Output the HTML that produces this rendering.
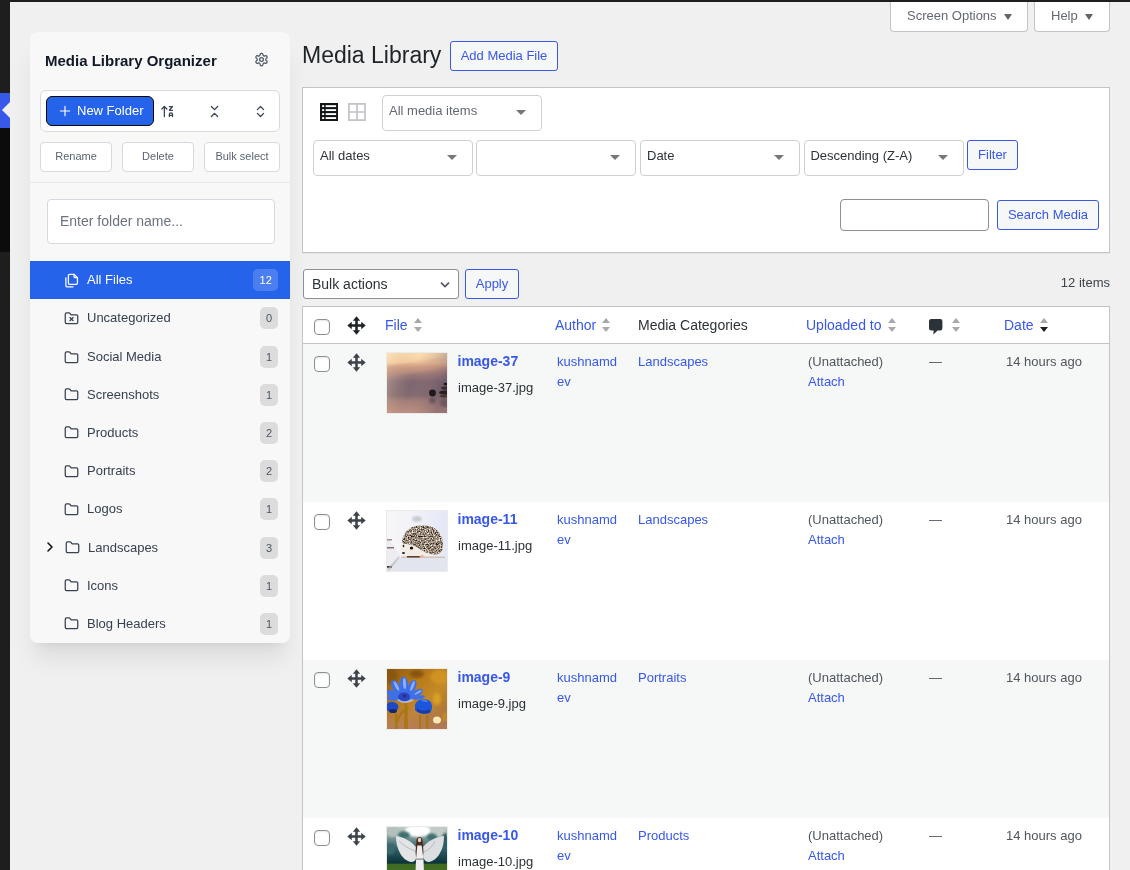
<!DOCTYPE html>
<html lang="en">
<head>
<meta charset="utf-8">
<title>Media Library</title>
<style>
*{box-sizing:border-box}
html,body{margin:0;padding:0}
body{width:1130px;height:870px;overflow:hidden;background:#f0f0f1;font-family:"Liberation Sans",Arial,sans-serif;font-size:13px;line-height:1.4;color:#3c434a;position:relative;will-change:transform}
a{color:#3858e9;text-decoration:none}
.abs{position:absolute}
/* left dark strip */
#strip{left:0;top:0;width:10px;height:870px;background:#1e1e1e}
#strip .cur{left:0;top:93px;width:10px;height:35px;background:#3858e9}
#strip .cur:after{content:"";position:absolute;right:0;top:9px;border:8px solid transparent;border-right-color:#f0f0f1;border-left-width:0}
#strip .sub{left:0;top:128px;width:10px;height:124px;background:#0c0c0c}
#topbar{left:0;top:0;width:1130px;height:2px;background:#1e1e1e;z-index:5}
/* screen meta */
.smeta{top:0;height:32px;background:#fff;border:1px solid #c3c4c7;border-top:none;border-radius:0 0 4px 4px;color:#646970;font-size:13px;line-height:31px;padding-left:16px;white-space:nowrap}
.smeta i{display:inline-block;width:0;height:0;border:4px solid transparent;border-top:6px solid #5f656d;border-bottom-width:0;margin-left:7px;vertical-align:0.500px}
/* sidebar */
#side{left:30px;top:32px;width:260px;height:610.700px;background:#f8f8f8;border-radius:8px;box-shadow:0 20px 25px -5px rgba(0,0,0,.085),0 8px 10px -6px rgba(0,0,0,.07);overflow:hidden}
#side h2{position:absolute;left:15px;top:19px;margin:0;font-size:15px;line-height:20px;font-weight:700;color:#111827;white-space:nowrap}
.tb{left:10px;top:58px;width:240px;height:42px;border:1px solid #d5d9e0;border-radius:6px;background:#fff}
.nf{left:16px;top:64px;width:108px;height:30px;background:#2563eb;border:1px solid #0a0a0a;border-radius:6px;color:#fff;font-size:13px;line-height:28px;white-space:nowrap}
.sbtn{top:110.300px;height:29.700px;border:1px solid #d5d9e0;border-radius:4px;background:#fff;color:#5b6472;font-size:11px;line-height:26.500px;text-align:center}
.hr{left:0;top:150px;width:260px;height:1px;background:#e5e7eb}
.inp{left:17px;top:167.300px;width:228px;height:45.200px;border:1px solid #d5d9e0;border-radius:4px;background:#fff;color:#6b7280;font-size:14px;line-height:43px;padding-left:12px}
.fi{left:0;width:260px;height:38.220px;color:#374151;font-size:13px}
.fi.act{background:#2563eb;color:#fff}
.fi span.l{position:absolute;left:57px;top:0;line-height:38px;white-space:nowrap}
.fi svg.ic{position:absolute;left:34px;top:11.500px;width:15px;height:15px}
.fi b{position:absolute;right:12px;top:8px;min-width:18px;height:22px;border-radius:5px;background:#dcdcdc;color:#4b5563;font-size:11px;font-weight:400;line-height:22px;text-align:center;padding:0 6px}
.fi.act b{background:#4b7ff0;color:#fff;padding:0 6.200px}
/* main */
h1{position:absolute;left:302px;top:40px;margin:0;font-size:23px;font-weight:400;line-height:30px;color:#1d2327;white-space:nowrap}
.btn{border:1px solid #3858e9;border-radius:3px;background:#f6f7f7;color:#3858e9;font-size:13px;text-align:center;white-space:nowrap}
#filter{left:302px;top:87px;width:808px;height:166px;background:#fff;border:1px solid #c3c4c7;box-shadow:0 1px 1px rgba(0,0,0,.04)}
.sel{height:36px;border:1px solid #d0d0d0;border-radius:4px;background:#fff;color:#2c3338;font-size:13px;line-height:30px;padding-left:6px;white-space:nowrap}
.sel:after{content:"";position:absolute;right:15px;top:14px;border:5px solid transparent;border-top:5px solid #777;border-bottom-width:0}
#tbl{left:302px;top:306px;width:808px;height:600px;background:#fff;border:1px solid #c3c4c7;box-shadow:0 1px 1px rgba(0,0,0,.04)}
.thead{left:0;top:0;width:806px;height:37px;border-bottom:1px solid #c3c4c7;background:#fff}
.row{left:0;width:806px;height:158px}
.row.odd{background:#f6f7f7}
.cb{left:11px;width:16px;height:16px;border:1px solid #8c8f94;border-radius:4px;background:#fff;box-shadow:inset 0 1px 2px rgba(0,0,0,.1)}
.th{top:8px;font-size:14px;line-height:20px;white-space:nowrap}
.t{white-space:nowrap;font-size:13px;line-height:20px}
.sort{display:inline-block;position:relative;width:8px;height:14px;margin-left:6px;vertical-align:-2px}
.sort:before,.sort:after{content:"";position:absolute;left:0;border:4px solid transparent}
.sort:before{top:0;border-bottom:5px solid #a7aaad;border-top-width:0}
.sort:after{bottom:0;border-top:5px solid #a7aaad;border-bottom-width:0}
.sort.d:after{border-top-color:#1d2327}
.mv{width:19px;height:19px}
.thumb{left:83px;width:62px;height:62px;border:1px solid #ebebeb;overflow:hidden;background:#fff}
.thumb svg{display:block}
</style>
</head>
<body>
<div id="strip" class="abs"><div class="cur abs"></div><div class="sub abs"></div></div>
<div id="topbar" class="abs"></div>

<div class="smeta abs" style="left:890px;width:138px">Screen Options<i></i></div>
<div class="smeta abs" style="left:1034px;width:76px">Help<i></i></div>

<!-- SIDEBAR -->
<div id="side" class="abs">
  <h2>Media Library Organizer</h2>
  <svg class="abs" style="left:223.900px;top:20.300px;width:15px;height:15px" viewBox="0 0 24 24" fill="none" stroke="#4b5563" stroke-width="2" stroke-linecap="round" stroke-linejoin="round"><path d="M12.22 2h-.44a2 2 0 0 0-2 2v.18a2 2 0 0 1-1 1.73l-.43.25a2 2 0 0 1-2 0l-.15-.08a2 2 0 0 0-2.73.73l-.22.38a2 2 0 0 0 .73 2.73l.15.1a2 2 0 0 1 1 1.72v.51a2 2 0 0 1-1 1.74l-.15.09a2 2 0 0 0-.73 2.73l.22.38a2 2 0 0 0 2.73.73l.15-.08a2 2 0 0 1 2 0l.43.25a2 2 0 0 1 1 1.73V20a2 2 0 0 0 2 2h.44a2 2 0 0 0 2-2v-.18a2 2 0 0 1 1-1.73l.43-.25a2 2 0 0 1 2 0l.15.08a2 2 0 0 0 2.73-.73l.22-.39a2 2 0 0 0-.73-2.73l-.15-.08a2 2 0 0 1-1-1.74v-.5a2 2 0 0 1 1-1.74l.15-.09a2 2 0 0 0 .73-2.73l-.22-.38a2 2 0 0 0-2.73-.73l-.15.08a2 2 0 0 1-2 0l-.43-.25a2 2 0 0 1-1-1.73V4a2 2 0 0 0-2-2z"/><circle cx="12" cy="12" r="3"/></svg>
  <div class="tb abs"></div>
  <div class="nf abs"><svg class="abs" style="left:10.500px;top:7px;width:14px;height:14px" viewBox="0 0 24 24" fill="none" stroke="#fff" stroke-width="2" stroke-linecap="round"><path d="M4 12h16M12 4v16"/></svg><span class="abs" style="left:30px;top:0">New Folder</span></div>
  <svg class="abs" style="left:129.800px;top:72px;width:15px;height:15px" viewBox="0 0 24 24" fill="none" stroke="#374151" stroke-width="2" stroke-linecap="round" stroke-linejoin="round"><path d="m3 8 4-4 4 4"/><path d="M7 4v16"/><path d="M15 4h5l-5 6h5"/><path d="M15 20v-3.5a2.5 2.5 0 0 1 5 0V20"/><path d="M20 18h-5"/></svg>
  <svg class="abs" style="left:177px;top:72px;width:15px;height:15px" viewBox="0 0 24 24" fill="none" stroke="#374151" stroke-width="2" stroke-linecap="round" stroke-linejoin="round"><path d="m7 20 5-5 5 5"/><path d="m7 4 5 5 5-5"/></svg>
  <svg class="abs" style="left:223px;top:72px;width:15px;height:15px" viewBox="0 0 24 24" fill="none" stroke="#374151" stroke-width="2" stroke-linecap="round" stroke-linejoin="round"><path d="m7 15 5 5 5-5"/><path d="m7 9 5-5 5 5"/></svg>
  <div class="sbtn abs" style="left:10px;width:72px">Rename</div>
  <div class="sbtn abs" style="left:92px;width:72px">Delete</div>
  <div class="sbtn abs" style="left:174px;width:76px">Bulk select</div>
  <div class="hr abs"></div>
  <div class="inp abs">Enter folder name...</div>

  <div class="fi act abs" style="top:229.0px"><svg class="ic" viewBox="0 0 24 24" fill="none" stroke="#fff" stroke-width="2" stroke-linecap="round" stroke-linejoin="round"><path d="M21.500 7.500H18a2 2 0 0 1-2-2V2"/><path d="M9 18a2 2 0 0 1-2-2V4a2 2 0 0 1 2-2h7l5.500 5.500V16a2 2 0 0 1-2 2Z"/><path d="M3 7.600v12.800A1.600 1.600 0 0 0 4.600 22h9.800"/></svg><span class="l">All Files</span><b>12</b></div>
  <div class="fi abs" style="top:267.22px"><svg class="ic" viewBox="0 0 24 24" fill="none" stroke="#374151" stroke-width="2" stroke-linecap="round" stroke-linejoin="round"><path d="M20 20a2 2 0 0 0 2-2V8a2 2 0 0 0-2-2h-7.900a2 2 0 0 1-1.690-.9L9.600 3.900A2 2 0 0 0 7.930 3H4a2 2 0 0 0-2 2v13a2 2 0 0 0 2 2Z"/><path d="m9.500 10.500 5 5"/><path d="m14.500 10.500-5 5"/></svg><span class="l">Uncategorized</span><b>0</b></div>
  <div class="fi abs" style="top:306px"><svg class="ic" viewBox="0 0 24 24" fill="none" stroke="#374151" stroke-width="2" stroke-linecap="round" stroke-linejoin="round"><path d="M20 20a2 2 0 0 0 2-2V8a2 2 0 0 0-2-2h-7.900a2 2 0 0 1-1.690-.9L9.600 3.900A2 2 0 0 0 7.930 3H4a2 2 0 0 0-2 2v13a2 2 0 0 0 2 2Z"/></svg><span class="l">Social Media</span><b>1</b></div>
  <div class="fi abs" style="top:343.66px"><svg class="ic" viewBox="0 0 24 24" fill="none" stroke="#374151" stroke-width="2" stroke-linecap="round" stroke-linejoin="round"><path d="M20 20a2 2 0 0 0 2-2V8a2 2 0 0 0-2-2h-7.900a2 2 0 0 1-1.690-.9L9.600 3.900A2 2 0 0 0 7.930 3H4a2 2 0 0 0-2 2v13a2 2 0 0 0 2 2Z"/></svg><span class="l">Screenshots</span><b>1</b></div>
  <div class="fi abs" style="top:381.88px"><svg class="ic" viewBox="0 0 24 24" fill="none" stroke="#374151" stroke-width="2" stroke-linecap="round" stroke-linejoin="round"><path d="M20 20a2 2 0 0 0 2-2V8a2 2 0 0 0-2-2h-7.900a2 2 0 0 1-1.690-.9L9.600 3.900A2 2 0 0 0 7.930 3H4a2 2 0 0 0-2 2v13a2 2 0 0 0 2 2Z"/></svg><span class="l">Products</span><b>2</b></div>
  <div class="fi abs" style="top:420.1px"><svg class="ic" viewBox="0 0 24 24" fill="none" stroke="#374151" stroke-width="2" stroke-linecap="round" stroke-linejoin="round"><path d="M20 20a2 2 0 0 0 2-2V8a2 2 0 0 0-2-2h-7.900a2 2 0 0 1-1.690-.9L9.600 3.900A2 2 0 0 0 7.930 3H4a2 2 0 0 0-2 2v13a2 2 0 0 0 2 2Z"/></svg><span class="l">Portraits</span><b>2</b></div>
  <div class="fi abs" style="top:458.32px"><svg class="ic" viewBox="0 0 24 24" fill="none" stroke="#374151" stroke-width="2" stroke-linecap="round" stroke-linejoin="round"><path d="M20 20a2 2 0 0 0 2-2V8a2 2 0 0 0-2-2h-7.900a2 2 0 0 1-1.690-.9L9.600 3.900A2 2 0 0 0 7.930 3H4a2 2 0 0 0-2 2v13a2 2 0 0 0 2 2Z"/></svg><span class="l">Logos</span><b>1</b></div>
  <div class="fi abs" style="top:496.54px"><svg class="abs" style="left:11.500px;top:10px;width:16px;height:16px" viewBox="0 0 24 24" fill="none" stroke="#111" stroke-width="2.300" stroke-linecap="round" stroke-linejoin="round"><path d="m9 18 6-6-6-6"/></svg><svg class="ic" style="left:35px" viewBox="0 0 24 24" fill="none" stroke="#374151" stroke-width="2" stroke-linecap="round" stroke-linejoin="round"><path d="M20 20a2 2 0 0 0 2-2V8a2 2 0 0 0-2-2h-7.900a2 2 0 0 1-1.690-.9L9.600 3.900A2 2 0 0 0 7.930 3H4a2 2 0 0 0-2 2v13a2 2 0 0 0 2 2Z"/></svg><span class="l" style="left:58px">Landscapes</span><b>3</b></div>
  <div class="fi abs" style="top:534.76px"><svg class="ic" viewBox="0 0 24 24" fill="none" stroke="#374151" stroke-width="2" stroke-linecap="round" stroke-linejoin="round"><path d="M20 20a2 2 0 0 0 2-2V8a2 2 0 0 0-2-2h-7.900a2 2 0 0 1-1.690-.9L9.600 3.900A2 2 0 0 0 7.930 3H4a2 2 0 0 0-2 2v13a2 2 0 0 0 2 2Z"/></svg><span class="l">Icons</span><b>1</b></div>
  <div class="fi abs" style="top:572.98px"><svg class="ic" viewBox="0 0 24 24" fill="none" stroke="#374151" stroke-width="2" stroke-linecap="round" stroke-linejoin="round"><path d="M20 20a2 2 0 0 0 2-2V8a2 2 0 0 0-2-2h-7.900a2 2 0 0 1-1.690-.9L9.600 3.900A2 2 0 0 0 7.930 3H4a2 2 0 0 0-2 2v13a2 2 0 0 0 2 2Z"/></svg><span class="l">Blog Headers</span><b>1</b></div>
</div>

<!-- MAIN -->
<h1>Media Library</h1>
<div class="btn abs" style="left:450px;top:41px;width:108px;height:30px;line-height:28px">Add Media File</div>

<div id="filter" class="abs">
  <svg class="abs" style="left:17px;top:15px;width:18px;height:18px" viewBox="0 0 19 19"><rect width="19" height="19" fill="#101517"/><g fill="#fff"><rect x="2.200" y="2.300" width="2.200" height="2"/><rect x="6" y="2.300" width="11" height="2"/><rect x="2.200" y="6.500" width="2.200" height="2"/><rect x="6" y="6.500" width="11" height="2"/><rect x="2.200" y="10.700" width="2.200" height="2"/><rect x="6" y="10.700" width="11" height="2"/><rect x="2.200" y="14.900" width="2.200" height="2"/><rect x="6" y="14.900" width="11" height="2"/></g></svg>
  <svg class="abs" style="left:45px;top:15px;width:18px;height:18px" viewBox="0 0 19 19"><path fill="none" stroke="#c3c4c7" stroke-width="1.800" d="M1 1h17v17H1ZM9.500 1v17M1 9.500h17"/></svg>
  <div class="sel abs" style="left:79px;top:7px;width:160px;color:#646970">All media items</div>
  <div class="sel abs" style="left:10px;top:52px;width:160px">All dates</div>
  <div class="sel abs" style="left:173px;top:52px;width:160px"></div>
  <div class="sel abs" style="left:337px;top:52px;width:160px">Date</div>
  <div class="sel abs" style="left:501.400px;top:52px;width:159.200px;padding-left:5px">Descending (Z-A)</div>
  <div class="btn abs" style="left:664px;top:52px;width:51px;height:30px;line-height:28px">Filter</div>
  <div class="abs" style="left:537px;top:111px;width:149px;height:32px;border:1px solid #8c8f94;border-radius:4px;background:#fff"></div>
  <div class="btn abs" style="left:694px;top:112px;width:102px;height:30px;line-height:28px">Search Media</div>
</div>

<div class="abs" style="left:303px;top:269px;width:156px;height:30px;border:1px solid #8c8f94;border-radius:3px;background:#fff;color:#2c3338;font-size:14px;line-height:28px;padding-left:8px">Bulk actions<svg class="abs" style="right:5px;top:7px;width:16px;height:16px" viewBox="0 0 20 20" fill="none" stroke="#50575e" stroke-width="2"><path d="M5 7l5 5 5-5"/></svg></div>
<div class="btn abs" style="left:465px;top:269px;width:54px;height:30px;line-height:28px">Apply</div>
<div class="abs t" style="right:20px;top:273px;color:#3c434a">12 items</div>

<div id="tbl" class="abs">
<div class="thead abs">
<div class="cb abs" style="top:12px"></div>
<svg class="abs mv" style="left:43.500px;top:8.5px" viewBox="0 0 18 18"><path fill="#1d2327" d="M9 0.300 12.500 4.500H10.200V7.800h3.300V5.500L17.700 9l-4.200 3.500V10.200H10.200v3.300h2.300L9 17.700 5.500 13.500H7.800V10.200H4.500v2.300L0.300 9l4.200-3.500V7.800H7.800V4.500H5.500Z"/></svg>
<div class="th abs" style="left:82px"><a>File</a><span class="sort"></span></div>
<div class="th abs" style="left:252px"><a>Author</a><span class="sort"></span></div>
<div class="th abs" style="left:335px;color:#2c3338">Media Categories</div>
<div class="th abs" style="left:503px"><a>Uploaded to</a><span class="sort"></span></div>
<svg class="abs" style="left:626px;top:12px;width:14px;height:16px" viewBox="0 0 14 16"><path fill="#2c3338" d="M2.200 0h9a2.200 2.200 0 0 1 2.200 2.200v7a2.200 2.200 0 0 1-2.200 2.200H8.600L4.400 15.400 4.600 11.400H2.200a2.200 2.200 0 0 1-2.200-2.200v-7A2.200 2.200 0 0 1 2.200 0Z"/></svg>
<span class="sort abs" style="left:649px;top:10px;margin:0"></span>
<div class="th abs" style="left:701px"><a>Date</a><span class="sort d"></span></div>
</div>
<div class="row abs odd" style="top:37px">
<div class="cb abs" style="top:12px"></div>
<svg class="abs mv" style="left:43.500px;top:8.5px" viewBox="0 0 18 18"><path fill="#3c434a" d="M9 0.300 12.500 4.500H10.200V7.800h3.300V5.500L17.700 9l-4.200 3.500V10.200H10.200v3.300h2.300L9 17.700 5.500 13.500H7.800V10.200H4.500v2.300L0.300 9l4.200-3.500V7.800H7.800V4.500H5.500Z"/></svg>
<div class="thumb abs t1" style="top:8px"><svg width="60" height="60" viewBox="0 0 60 60"><defs><linearGradient id="t1a" x1="0" y1="0" x2="0" y2="1"><stop offset="0" stop-color="#fbdfb2"/><stop offset=".16" stop-color="#f6cfa2"/><stop offset=".24" stop-color="#cf9c84"/><stop offset=".36" stop-color="#9a7878"/><stop offset=".48" stop-color="#7d6672"/><stop offset=".7" stop-color="#80696f"/><stop offset=".8" stop-color="#a27e78"/><stop offset="1" stop-color="#bd9082"/></linearGradient><linearGradient id="t1b" x1="0" y1="0" x2="1" y2=".25"><stop offset="0" stop-color="#ffe9bc" stop-opacity=".45"/><stop offset=".5" stop-color="#c09080" stop-opacity=".0"/><stop offset="1" stop-color="#5c4a60" stop-opacity=".38"/></linearGradient><filter id="bl1"><feGaussianBlur stdDeviation="1"/></filter></defs><rect width="60" height="60" fill="url(#t1a)"/><rect width="60" height="60" fill="url(#t1b)"/><path d="M0 13 L60 4 L60 14 L0 24Z" fill="#c89880" opacity=".35" filter="url(#bl1)"/><ellipse cx="45.500" cy="40" rx="3.400" ry="3.400" fill="#1e191c"/><ellipse cx="45.500" cy="47.500" rx="3.200" ry="3" fill="#5c4c56" opacity=".75" filter="url(#bl1)"/><ellipse cx="58" cy="39.500" rx="6" ry="2" fill="#2a2024"/><ellipse cx="58.500" cy="35" rx="4.500" ry="1.800" fill="#3a2c30"/><ellipse cx="59" cy="31" rx="2.500" ry="1.300" fill="#1c1518"/><ellipse cx="58" cy="43" rx="5" ry="1.500" fill="#4a3830"/><ellipse cx="58" cy="50" rx="5" ry="4" fill="#5c4c58" opacity=".6" filter="url(#bl1)"/></svg></div>
<a class="abs t" style="left:154.500px;top:7px;font-size:14px;font-weight:700">image-37</a>
<div class="abs t" style="left:155px;top:34px;color:#2c3338">image-37.jpg</div>
<a class="abs t" style="left:254px;top:8px">kushnamd<br>ev</a>
<a class="abs t" style="left:335px;top:8px">Landscapes</a>
<div class="abs t" style="left:505px;top:8px;color:#50575e">(Unattached)<br><a>Attach</a></div>
<div class="abs t" style="left:626px;top:8px;color:#50575e">—</div>
<div class="abs t" style="left:703px;top:8px;color:#50575e">14 hours ago</div>
</div>
<div class="row abs" style="top:195px">
<div class="cb abs" style="top:12px"></div>
<svg class="abs mv" style="left:43.500px;top:8.5px" viewBox="0 0 18 18"><path fill="#3c434a" d="M9 0.300 12.500 4.500H10.200V7.800h3.300V5.500L17.700 9l-4.200 3.500V10.200H10.200v3.300h2.300L9 17.700 5.500 13.500H7.800V10.200H4.500v2.300L0.300 9l4.200-3.500V7.800H7.800V4.500H5.500Z"/></svg>
<div class="thumb abs t2" style="top:8px"><svg width="60" height="60" viewBox="0 0 60 60"><defs><linearGradient id="t2a" x1="0" y1="0" x2="1" y2="0"><stop offset="0" stop-color="#f7f7f9"/><stop offset=".5" stop-color="#f1f1f7"/><stop offset="1" stop-color="#e4e7f6"/></linearGradient><filter id="bl2"><feGaussianBlur stdDeviation="1.200"/></filter><filter id="bl2b"><feGaussianBlur stdDeviation=".5"/></filter><filter id="nz" x="0" y="0" width="100%" height="100%" color-interpolation-filters="sRGB"><feTurbulence type="fractalNoise" baseFrequency=".75" numOctaves="2" seed="7" result="n"/><feColorMatrix in="n" type="matrix" values="1.700 0 0 0 -.27  1.650 0 0 0 -.3  1.600 0 0 0 -.33  0 0 0 0 1" result="c"/><feComposite in="c" in2="SourceGraphic" operator="in"/></filter></defs><rect width="60" height="60" fill="url(#t2a)"/><rect x="0" y="47" width="60" height="13" fill="#e3e5ee"/><path d="M0 60 L13 44 L0 26Z" fill="#ececf2"/><ellipse cx="30" cy="8" rx="5" ry="3" fill="#c9cad4" filter="url(#bl2)"/><g filter="url(#bl2b)"><path d="M15 31 C16 17 30 12 42 15 C54 18 58 30 55 40 C52 45 40 46 30 41 C24 34 18 36 15 31Z" fill="#8d8073" filter="url(#nz)"/></g><path d="M14 33 C20 32 28 34 34 39 C40 43 48 44 52 44 L30 47 L17 46 C14 43 13 37 14 33Z" fill="#f3ede6" filter="url(#bl2b)"/><ellipse cx="24.500" cy="37" rx="1.700" ry="1.500" fill="#15110f"/><ellipse cx="16.500" cy="35" rx=".8" ry="1.200" fill="#221c18"/><ellipse cx="16.500" cy="42" rx="1.500" ry="1.100" fill="#2a2020"/><rect x="14" y="45.500" width="44" height="1.500" fill="#c9b9ae" opacity=".8"/><rect x="20" y="45" width="14" height="1.500" fill="#54402f"/><ellipse cx="35" cy="45.500" rx="2.500" ry="1.500" fill="#e8b8a8"/><rect x="0" y="28" width="5" height="1.500" fill="#a89088"/><rect x="0" y="36" width="7" height="1.500" fill="#8a7078"/><rect x="0" y="55" width="5" height="1.800" fill="#40302c"/><path d="M0 58 L12 45 L13 46 L2 60Z" fill="#b8b0b4" opacity=".6"/></svg></div>
<a class="abs t" style="left:154.500px;top:7px;font-size:14px;font-weight:700">image-11</a>
<div class="abs t" style="left:155px;top:34px;color:#2c3338">image-11.jpg</div>
<a class="abs t" style="left:254px;top:8px">kushnamd<br>ev</a>
<a class="abs t" style="left:335px;top:8px">Landscapes</a>
<div class="abs t" style="left:505px;top:8px;color:#50575e">(Unattached)<br><a>Attach</a></div>
<div class="abs t" style="left:626px;top:8px;color:#50575e">—</div>
<div class="abs t" style="left:703px;top:8px;color:#50575e">14 hours ago</div>
</div>
<div class="row abs odd" style="top:353px">
<div class="cb abs" style="top:12px"></div>
<svg class="abs mv" style="left:43.500px;top:8.5px" viewBox="0 0 18 18"><path fill="#3c434a" d="M9 0.300 12.500 4.500H10.200V7.800h3.300V5.500L17.700 9l-4.200 3.500V10.200H10.200v3.300h2.300L9 17.700 5.500 13.500H7.800V10.200H4.500v2.300L0.300 9l4.200-3.500V7.800H7.800V4.500H5.500Z"/></svg>
<div class="thumb abs t3" style="top:8px"><svg width="60" height="60" viewBox="0 0 60 60"><defs><linearGradient id="t3a" x1="0" y1="0" x2="1" y2="1"><stop offset="0" stop-color="#8c5a12"/><stop offset=".35" stop-color="#b97a18"/><stop offset=".6" stop-color="#c48a28"/><stop offset="1" stop-color="#a06a38"/></linearGradient><linearGradient id="t3b" x1="0" y1="0" x2="0" y2="1"><stop offset=".55" stop-color="#b07858" stop-opacity="0"/><stop offset="1" stop-color="#b47c5e" stop-opacity=".85"/></linearGradient><filter id="bl3"><feGaussianBlur stdDeviation="1.500"/></filter><filter id="bl3b"><feGaussianBlur stdDeviation=".45"/></filter></defs><rect width="60" height="60" fill="url(#t3a)"/><rect width="60" height="60" fill="url(#t3b)"/><ellipse cx="52" cy="8" rx="9" ry="7" fill="#d89a20" opacity=".7" filter="url(#bl3)"/><ellipse cx="50" cy="30" rx="4" ry="6" fill="#e0a820" opacity=".8" filter="url(#bl3)"/><ellipse cx="30" cy="5" rx="7" ry="4" fill="#6a4008" opacity=".6" filter="url(#bl3)"/><ellipse cx="5" cy="8" rx="6" ry="8" fill="#7a4c10" opacity=".5" filter="url(#bl3)"/><g fill="#a87818" filter="url(#bl3b)"><path d="M17.500 34 L20.500 34 L21 60 L17 60Z"/><rect x="8" y="44" width="2.500" height="16"/><rect x="32" y="46" width="2" height="14"/><rect x="39" y="46" width="2.500" height="14"/><path d="M17 40 C12 44 10 50 9 54 L11 54 C12 50 14 46 18 42Z"/></g><g filter="url(#bl3b)"><g fill="#3f70e8"><ellipse cx="9" cy="18" rx="4" ry="7.500" transform="rotate(-28 9 18)"/><ellipse cx="17" cy="16" rx="4.300" ry="8.500" transform="rotate(-4 17 16)"/><ellipse cx="25" cy="18" rx="3.800" ry="7.500" transform="rotate(22 25 18)"/><ellipse cx="5" cy="25" rx="3.300" ry="6" transform="rotate(-62 5 25)"/><ellipse cx="30" cy="24" rx="3.200" ry="6.500" transform="rotate(60 30 24)"/><ellipse cx="32" cy="28.500" rx="2" ry="6" transform="rotate(80 32 28.500)"/><ellipse cx="5" cy="29.500" rx="2.200" ry="5" transform="rotate(-85 5 29.500)"/><ellipse cx="17" cy="26" rx="11" ry="7"/></g><g fill="#8fb0f6"><ellipse cx="9.500" cy="17" rx="1.400" ry="5" transform="rotate(-28 9.500 17)"/><ellipse cx="17.500" cy="14.500" rx="1.500" ry="5.500" transform="rotate(-4 17.500 14.500)"/><ellipse cx="25.500" cy="17" rx="1.300" ry="5" transform="rotate(22 25.500 17)"/><ellipse cx="31" cy="23.500" rx="1" ry="4" transform="rotate(60 31 23.500)"/></g><ellipse cx="17" cy="28" rx="6" ry="4.500" fill="#2b45c4"/><ellipse cx="17.500" cy="27" rx="1.700" ry="1.400" fill="#3a2c5c"/><path d="M10 31 C14 35 22 35 27 31 L24 30 C20 33 15 33 12 30Z" fill="#c8d4f4" opacity=".7"/><path d="M28 36 C29 31 36 29 41 31 C46 33 46 40 43 44 C38 46 31 45 28 41Z" fill="#1c56dc"/><path d="M34 31 C37 30 40 31 41 33 C38 33 36 33 34 31Z" fill="#4a80f0"/><path d="M30 42 C33 45 39 45 43 43 L42 40 C38 43 33 42 30 39Z" fill="#1a3a9c"/><ellipse cx="5" cy="38" rx="6.500" ry="5" fill="#1c48c8"/><ellipse cx="6" cy="42" rx="4" ry="2" fill="#18286c"/></g><ellipse cx="50" cy="51" rx="4" ry="3.500" fill="#fbe8b8" filter="url(#bl3b)"/><ellipse cx="58" cy="48" rx="3" ry="5" fill="#c89020" opacity=".8" filter="url(#bl3)"/></svg></div>
<a class="abs t" style="left:154.500px;top:7px;font-size:14px;font-weight:700">image-9</a>
<div class="abs t" style="left:155px;top:34px;color:#2c3338">image-9.jpg</div>
<a class="abs t" style="left:254px;top:8px">kushnamd<br>ev</a>
<a class="abs t" style="left:335px;top:8px">Portraits</a>
<div class="abs t" style="left:505px;top:8px;color:#50575e">(Unattached)<br><a>Attach</a></div>
<div class="abs t" style="left:626px;top:8px;color:#50575e">—</div>
<div class="abs t" style="left:703px;top:8px;color:#50575e">14 hours ago</div>
</div>
<div class="row abs" style="top:511px">
<div class="cb abs" style="top:12px"></div>
<svg class="abs mv" style="left:43.500px;top:8.5px" viewBox="0 0 18 18"><path fill="#3c434a" d="M9 0.300 12.500 4.500H10.200V7.800h3.300V5.500L17.700 9l-4.200 3.500V10.200H10.200v3.300h2.300L9 17.700 5.500 13.500H7.800V10.200H4.500v2.300L0.300 9l4.200-3.500V7.800H7.800V4.500H5.500Z"/></svg>
<div class="thumb abs t4" style="top:8px"><svg width="60" height="60" viewBox="0 0 60 60"><defs><linearGradient id="t4a" x1="0" y1="0" x2="0" y2="1"><stop offset="0" stop-color="#c3cdc9"/><stop offset=".15" stop-color="#86a19e"/><stop offset=".36" stop-color="#2f5f64"/><stop offset=".6" stop-color="#0c323a"/><stop offset=".625" stop-color="#3f6a22"/><stop offset="1" stop-color="#4a7a28"/></linearGradient><filter id="bl4"><feGaussianBlur stdDeviation="1.300"/></filter><filter id="bl4b"><feGaussianBlur stdDeviation=".7"/></filter></defs><rect width="60" height="60" fill="url(#t4a)"/><ellipse cx="31" cy="4" rx="13" ry="6" fill="#fff" filter="url(#bl4)"/><ellipse cx="6" cy="5" rx="7" ry="5" fill="#b4c0bc" filter="url(#bl4)"/><ellipse cx="51" cy="5" rx="8" ry="5" fill="#c4ccc8" filter="url(#bl4)"/><ellipse cx="17" cy="8" rx="6" ry="3.500" fill="#3c7070" filter="url(#bl4)"/><ellipse cx="45" cy="10" rx="5" ry="3.500" fill="#3c7070" filter="url(#bl4)"/><ellipse cx="58" cy="14" rx="3" ry="8" fill="#2c5c60" filter="url(#bl4)"/><ellipse cx="3" cy="22" rx="5" ry="6" fill="#3a686c" filter="url(#bl4)"/><g filter="url(#bl4b)"><path d="M29 20 C25 15 17 10 9 9 C9 15 10 21 13 26 C15 30 19 34 24 35 C27 35 29 33 30 30Z" fill="#e2e4e6"/><path d="M36 20 C40 15 48 10 57 9 C57 15 56 21 53 26 C51 30 47 34 42 35 C39 35 37 33 36 30Z" fill="#dcdee2"/><path d="M12 14 C16 18 22 22 28 24 M48 14 C46 19 42 23 37 25" stroke="#b8bcc0" stroke-width="1" fill="none"/><path d="M29.500 13 C30 9 35 9 35.500 13 L36.500 25 L36 30 L29 30 L28.500 25Z" fill="#4a2c1c"/><ellipse cx="32.500" cy="13" rx="1.700" ry="2.200" fill="#ecd2c0"/><path d="M30.300 18.500 L34.700 18.500 L36.500 33 L37 46 L28.500 46 L29 33Z" fill="#eeeef0"/><rect x="28.500" y="31.500" width="8" height="1.300" fill="#8c8c94"/></g></svg></div>
<a class="abs t" style="left:154.500px;top:7px;font-size:14px;font-weight:700">image-10</a>
<div class="abs t" style="left:155px;top:34px;color:#2c3338">image-10.jpg</div>
<a class="abs t" style="left:254px;top:8px">kushnamd<br>ev</a>
<a class="abs t" style="left:335px;top:8px">Products</a>
<div class="abs t" style="left:505px;top:8px;color:#50575e">(Unattached)<br><a>Attach</a></div>
<div class="abs t" style="left:626px;top:8px;color:#50575e">—</div>
<div class="abs t" style="left:703px;top:8px;color:#50575e">14 hours ago</div>
</div>
</div>
</body>
</html>
